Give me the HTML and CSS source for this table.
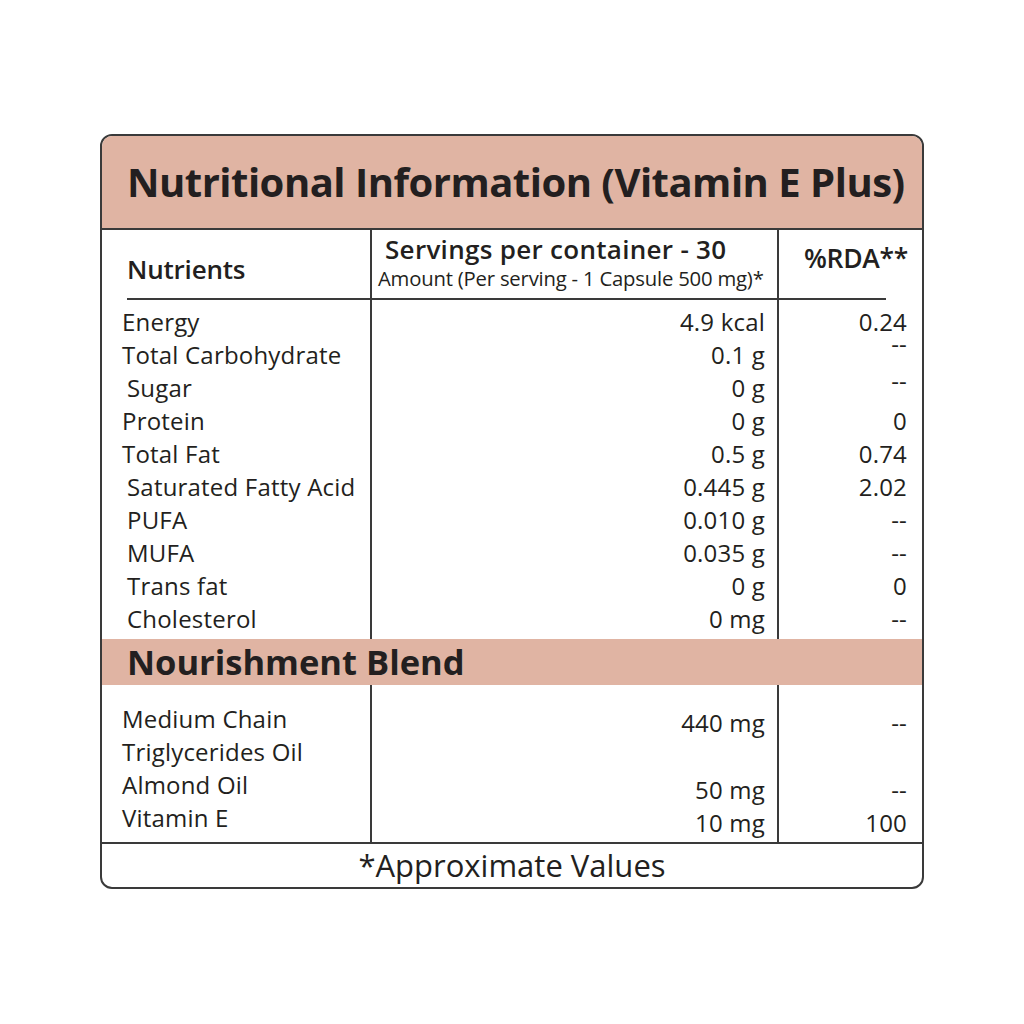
FILE: index.html
```html
<!DOCTYPE html>
<html>
<head>
<meta charset="utf-8">
<link rel="stylesheet" href="styles.css">
</head>
<body>
<div class="card">
  <div class="title">Nutritional Information (Vitamin E Plus)</div>
  <div class="section top">
    <div class="col c1">
      <div class="head h1"><span class="nutr">Nutrients</span></div>
      <div class="list">
        <div class="row">Energy</div>
        <div class="row">Total Carbohydrate</div>
        <div class="row ind">Sugar</div>
        <div class="row">Protein</div>
        <div class="row">Total Fat</div>
        <div class="row ind">Saturated Fatty Acid</div>
        <div class="row ind">PUFA</div>
        <div class="row ind">MUFA</div>
        <div class="row ind">Trans fat</div>
        <div class="row ind">Cholesterol</div>
      </div>
    </div>
    <div class="col c2">
      <div class="head h2">
        <div class="serv">Servings per container - 30</div>
        <div class="amt">Amount (Per serving - 1 Capsule 500 mg)*</div>
      </div>
      <div class="list">
        <div class="row">4.9 kcal</div>
        <div class="row">0.1 g</div>
        <div class="row">0 g</div>
        <div class="row">0 g</div>
        <div class="row">0.5 g</div>
        <div class="row">0.445 g</div>
        <div class="row">0.010 g</div>
        <div class="row">0.035 g</div>
        <div class="row">0 g</div>
        <div class="row">0 mg</div>
      </div>
    </div>
    <div class="col c3">
      <div class="head h3"><span class="rda">%RDA**</span></div>
      <div class="list">
        <div class="row">0.24</div>
        <div class="row up">--</div>
        <div class="row up2">--</div>
        <div class="row">0</div>
        <div class="row">0.74</div>
        <div class="row">2.02</div>
        <div class="row">--</div>
        <div class="row">--</div>
        <div class="row">0</div>
        <div class="row">--</div>
      </div>
    </div>
  </div>
  <div class="band">Nourishment Blend</div>
  <div class="section blend">
    <div class="col c1">
      <div class="list">
        <div class="row">Medium Chain</div>
        <div class="row">Triglycerides Oil</div>
        <div class="row">Almond Oil</div>
        <div class="row">Vitamin E</div>
      </div>
    </div>
    <div class="col c2">
      <div class="list">
        <div class="row r440">440 mg</div>
        <div class="row gap"></div>
        <div class="row r50">50 mg</div>
        <div class="row r10">10 mg</div>
      </div>
    </div>
    <div class="col c3">
      <div class="list">
        <div class="row r440">--</div>
        <div class="row gap"></div>
        <div class="row r50">--</div>
        <div class="row r10">100</div>
      </div>
    </div>
  </div>
  <div class="foot">*Approximate Values</div>
</div>
</body>
</html>
```

FILE: styles.css
```css
html, body {
  margin: 0;
  padding: 0;
  background: #ffffff;
}
body {
  padding: 134px 0 0 100px;
  font-family: "Open Sans", "Noto Sans", sans-serif;
  color: #231f20;
}
.card {
  box-sizing: border-box;
  width: 824px;
  height: 755px;
  border: 2px solid #3a3a3a;
  border-radius: 12px;
  overflow: hidden;
  display: flex;
  flex-direction: column;
}
.title {
  box-sizing: border-box;
  height: 94px;
  background: #e0b4a3;
  border-bottom: 2px solid #3a3a3a;
  font-weight: 700;
  font-size: 40px;
  letter-spacing: -0.5px;
  padding: 21px 0 0 25px;
  line-height: 50px;
  white-space: nowrap;
}
.section {
  display: grid;
  grid-template-columns: 268px 409px 143px;
}
.col {
  display: flex;
  flex-direction: column;
}
.c2 {
  border-left: 2px solid #3a3a3a;
  border-right: 2px solid #3a3a3a;
}
.head {
  box-sizing: border-box;
  height: 70px;
  border-bottom: 2px solid #3a3a3a;
}
.h1 {
  margin-left: 25px;
  padding-top: 21px;
}
.nutr {
  font-weight: 600;
  font-size: 26px;
  line-height: 36px;
  letter-spacing: -0.2px;
}
.h2 {
  padding-top: 5px;
}
.serv {
  font-weight: 600;
  font-size: 26px;
  line-height: 28px;
  letter-spacing: 0.3px;
  padding-left: 13px;
  white-space: nowrap;
}
.amt {
  font-size: 20.3px;
  line-height: 22px;
  margin-top: 4px;
  letter-spacing: -0.2px;
  padding-left: 6px;
  white-space: nowrap;
}
.h3 {
  margin-right: 36px;
  padding-top: 10px;
}
.rda {
  display: block;
  font-weight: 600;
  font-size: 26.5px;
  line-height: 36px;
  padding-left: 25px;
  letter-spacing: -0.3px;
  white-space: nowrap;
}
.list {
  font-size: 24px;
  letter-spacing: 0.2px;
}
.top .list {
  padding-top: 5px;
  padding-bottom: 4px;
}
.row {
  height: 33px;
  line-height: 33px;
  white-space: nowrap;
}
.c1 .row {
  padding-left: 20px;
}
.c1 .row.ind {
  padding-left: 25px;
}
.c2 .row {
  text-align: right;
  padding-right: 12px;
}
.c3 .row {
  text-align: right;
  padding-right: 15px;
}
.c3 .row.up {
  line-height: 12px;
}
.c3 .row.up2 {
  line-height: 20px;
}
.band {
  height: 46px;
  background: #e0b4a3;
  font-weight: 700;
  font-size: 34.5px;
  line-height: 46px;
  padding-left: 25px;
  letter-spacing: 0;
  white-space: nowrap;
}
.blend .list {
  padding-top: 17px;
  padding-bottom: 4px;
}
.blend .c2 .list,
.blend .c3 .list {
  padding-top: 21px;
}
.blend .row.gap {
  height: 34px;
}
.blend .row.r10 {
  height: 32px;
}
.foot {
  border-top: 2px solid #3a3a3a;
  flex: 1;
  text-align: center;
  font-size: 31px;
  line-height: 42px;
  letter-spacing: 0;
}
```
